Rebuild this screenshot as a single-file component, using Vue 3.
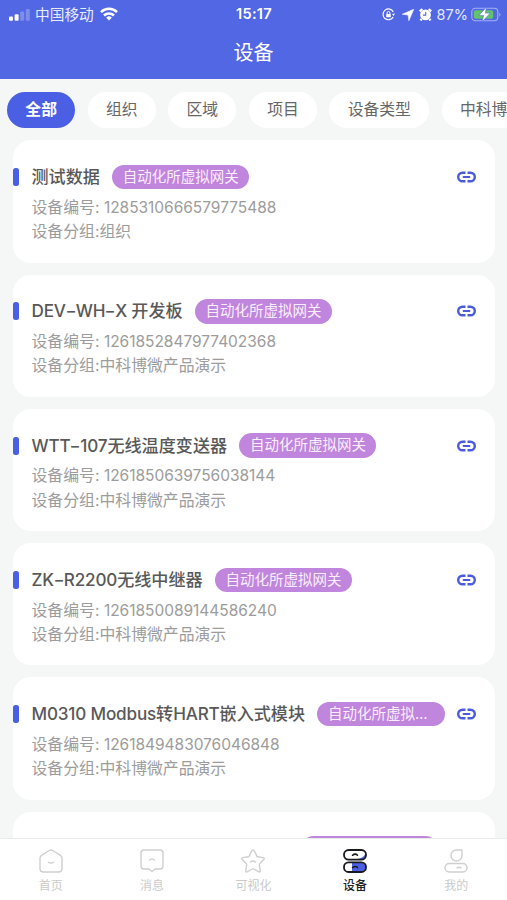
<script setup>
const tabs = ['全部', '组织', '区域', '项目', '设备类型', '中科博微']
const gateway = '自动化所虚拟网关'
const rows = [
  { name: '测试数据', id: '1285310666579775488', group: '组织' },
  { name: 'DEV-WH-X 开发板', id: '1261852847977402368', group: '中科博微产品演示' },
  { name: 'WTT-107无线温度变送器', id: '1261850639756038144', group: '中科博微产品演示' },
  { name: 'ZK-R2200无线中继器', id: '1261850089144586240', group: '中科博微产品演示' },
  { name: 'M0310 Modbus转HART嵌入式模块', id: '1261849483076046848', group: '中科博微产品演示' },
  { name: 'M1100 Modbus转HART 网关模块' },
]
const nav = [
  { key: 'home', label: '首页' },
  { key: 'msg', label: '消息' },
  { key: 'star', label: '可视化' },
  { key: 'device', label: '设备' },
  { key: 'me', label: '我的' },
]

// Splits a device name into hyphens, Latin runs and Chinese runs.
const parts = (name) =>
  name.match(/-|[\x20-\x2c\x2e-\x7e]+|[^\x00-\x7f]+/g).map((text) => ({
    text,
    kind: text === '-' ? 'dash' : text.charCodeAt(0) < 128 ? 'latin' : 'han',
  }))
</script>

<template>
  <div class="screen">
    <header class="header">
      <div class="status">
        <div class="status-left">
          <svg class="signal" width="22" height="12" viewBox="0 0 22 12" fill="#fff">
            <rect x="0" y="7.6" width="4" height="4.2" rx="1" />
            <rect x="5.6" y="5.2" width="4" height="6.6" rx="1" />
            <rect x="11.2" y="2.6" width="4" height="9.2" rx="1" opacity=".25" />
            <rect x="16.8" y="0" width="4" height="11.8" rx="1" opacity=".25" />
          </svg>
          <span class="carrier">中国移动</span>
          <svg class="wifi" width="18" height="14" viewBox="0 0 18 14" fill="none" stroke="#fff" stroke-width="2.6">
            <path d="M1 5.1a11.4 11.4 0 0 1 16 0" />
            <path d="M4 8.5a7.2 7.2 0 0 1 10 0" />
            <path d="M9 13.6 6.2 10.7a4 4 0 0 1 5.6 0z" fill="#fff" stroke="none" />
          </svg>
        </div>
        <span class="clock">15:17</span>
        <div class="status-right">
          <svg width="13" height="13" viewBox="0 0 13 13" fill="none" stroke="#fff" stroke-width="1.2">
            <path d="M11.3 3.9A5.4 5.4 0 1 0 11.2 9" />
            <path d="M10 6 11.7 8 13 5.6" fill="#fff" stroke="none" />
            <rect x="4.2" y="6" width="4.6" height="3.2" rx=".4" fill="#fff" stroke="none" />
            <path d="M5.1 6V4.9a1.4 1.4 0 0 1 2.8 0V6" stroke-width="1" />
          </svg>
          <svg class="arrow" width="12" height="12" viewBox="0 0 11 11" fill="#fff">
            <path d="M10.8.2 6.3 10.8 5.6 5.5.2 4.8z" stroke="#fff" stroke-width=".5" />
          </svg>
          <svg class="alarm" width="13" height="13" viewBox="0 0 13 13">
            <path d="M.8 3.4 3.3 1M12.2 3.4 9.7 1M2.6 11 1.5 12.5M10.4 11l1.1 1.5" stroke="#fff" stroke-width="2.2" />
            <circle cx="6.5" cy="6.9" r="5.4" fill="#fff" />
            <path d="M6.7 3.9v3.2H4" fill="none" stroke="#5267e4" stroke-width="1.1" />
          </svg>
          <span class="percent">87%</span>
          <svg class="battery" width="31" height="15" viewBox="0 0 31 15">
            <rect x=".8" y="1.3" width="26" height="12.4" rx="3.5" fill="none" stroke="#a5b0f3" stroke-width="1.1" />
            <rect x="2.8" y="3.2" width="19.4" height="8.6" rx="1.8" fill="#62c36b" />
            <path d="M28.2 5.4v4.2c2-.8 2-3.4 0-4.2z" fill="#8f9cee" />
            <path d="M15.7 0 7.8 8.4h4.8L11 15l8.3-8.9h-5z" fill="#fff" stroke="#5267e4" stroke-width=".6" />
          </svg>
        </div>
      </div>
      <h1 class="title">设备</h1>
    </header>

    <div class="tabs">
      <div v-for="(t, i) in tabs" :key="t" class="tab" :class="{ active: i === 0 }">{{ t }}</div>
    </div>

    <main class="list">
      <section v-for="r in rows" :key="r.name" class="card">
        <div class="card-head">
          <i class="bar"></i>
          <h2 class="name"><span v-for="(p, i) in parts(r.name)" :key="i" :class="p.kind">{{ p.text }}</span></h2>
          <span class="tag">{{ gateway }}</span>
          <svg class="link" width="19" height="12" viewBox="0 0 19 12" fill="none" stroke="#4a5bdc" stroke-width="2.4">
            <path d="M8.500 1.700H5.500a4.300 4.300 0 0 0 0 8.600h3M10.500 1.700h3a4.300 4.300 0 0 1 0 8.600h-3" />
            <path d="M5.800 6h7.400" stroke-width="2" />
          </svg>
        </div>
        <template v-if="r.id">
          <p class="line">设备编号: <span class="num">{{ r.id }}</span></p>
          <p class="line">设备分组:{{ r.group }}</p>
        </template>
      </section>
    </main>

    <nav class="nav">
      <div v-for="n in nav" :key="n.key" class="nav-item" :class="{ on: n.key === 'device' }">
        <svg width="24" height="24" viewBox="0 0 24 24" fill="none" stroke="#cfcfcf" stroke-width="1.4" stroke-linecap="round" stroke-linejoin="round">
          <template v-if="n.key === 'home'">
            <path d="M10.3 1.5 2.5 6.3Q1 7.3 1 9v10.5Q1 23 4.5 23h15q3.5 0 3.5-3.500V9q0-1.700-1.500-2.700l-7.800-4.800q-1.700-1-3.400 0z" />
            <path d="M9.500 13.200q2.500 1.800 5 0" />
          </template>
          <template v-else-if="n.key === 'msg'">
            <path d="M4 1h16q3 0 3 3v13q0 3-3 3h-5l-3 2.500L9 20H4q-3 0-3-3V4q0-3 3-3z" />
            <path d="M9.500 11q2.500-1.800 5 0" />
          </template>
          <template v-else-if="n.key === 'star'">
            <path d="M10.700 1.800q1.300-1.800 2.600 0l2.600 5.300q.3.600 1 .7l5.200.8q1.900.4.600 1.900l-4 4.200q-.5.500-.4 1.200l.9 5.700q.2 2-1.600 1.100L12.700 20q-.7-.4-1.400 0l-4.900 2.700q-1.800.9-1.600-1.100l.9-5.700q.1-.7-.4-1.200l-4-4.200Q0 9 1.900 8.600l5.200-.8q.7-.1 1-.7z" />
            <path d="M9.500 13q2.500-2 5 0" />
          </template>
          <template v-else-if="n.key === 'device'">
            <path d="M13.500 10.200Q20 9.500 22.300 5 22.700 10.200 18.500 10.200zM9 14h9.500a4.500 4.500 0 0 1 0 9H9z" fill="#4c60e5" stroke="none" />
            <rect x="1" y="1" width="22" height="9.700" rx="4.600" stroke="#18191f" stroke-width="1.800" />
            <rect x="1" y="13.300" width="22" height="9.700" rx="4.600" stroke="#18191f" stroke-width="1.800" />
            <path d="M9.500 6.300q2.800-2.300 5 0M9.500 18.600q2.800-2.300 5 0" stroke="#18191f" stroke-width="1.500" />
          </template>
          <template v-else>
            <path d="M18 1v5.500a5.500 5.500 0 1 1-5.500-5.500z" />
            <rect x="1" y="14.500" width="22" height="8.500" rx="4.200" />
            <path d="M13 18.800q2-1.200 4 0" />
          </template>
        </svg>
        <span class="nav-label">{{ n.label }}</span>
      </div>
    </nav>
  </div>
</template>

<style>
body {
  background: #f5f7f7;
  overflow: hidden;
}
</style>

<style scoped>
.screen {
  width: 507px;
  height: 900px;
  display: flex;
  flex-direction: column;
  overflow: hidden;
  background: #f5f7f7;
  font-family: Inter, 'Noto Sans CJK SC', sans-serif;
}
.header {
  flex: none;
  height: 79px;
  background: #5267e4;
  color: #fff;
}
.status {
  height: 28px;
  display: grid;
  grid-template-columns: 1fr auto 1fr;
  align-items: center;
  padding: 0 5px 0 9px;
}
.status-left,
.status-right {
  display: flex;
  align-items: center;
}
.status-right {
  justify-content: flex-end;
}
.signal {
  margin-right: 4px;
}
.carrier {
  padding-top: 1px;
  font-size: 14.7px;
  line-height: 28px;
  color: #e8ebff;
}
.wifi {
  margin: 0 0 2px 6.5px;
}
.clock {
  padding: 0 3px 1px 0;
  font-size: 14.6px;
  font-weight: 600;
  letter-spacing: 0.3px;
}
.arrow {
  margin-left: 7px;
}
.alarm {
  margin-left: 5px;
}
.percent {
  margin: 0 3px 0 5px;
  padding-bottom: 1px;
  font-size: 14.5px;
  color: #e3e7ff;
}
.title {
  margin: 11px 0 0;
  text-align: center;
  font-size: 20px;
  line-height: 28px;
  font-weight: 400;
}
.tabs {
  flex: none;
  display: flex;
  gap: 12.3px;
  padding: 12.5px 0 12.3px 7px;
  overflow: hidden;
}
.tab {
  flex: none;
  height: 36.5px;
  padding: 0 18.35px;
  border-radius: 19px;
  background: #fff;
  color: #666;
  font-size: 15.8px;
  line-height: 35.5px;
  white-space: nowrap;
}
.tab.active {
  background: #4a5fe4;
  color: #fff;
  font-weight: 700;
}
.list {
  flex: 1;
  min-height: 0;
  overflow: hidden;
  display: flex;
  flex-direction: column;
  gap: 12px;
  padding: 0 12.5px 0 13px;
}
.card {
  flex: none;
  box-sizing: border-box;
  height: 122.3px;
  padding-top: 24.5px;
  border-radius: 18px;
  background: #fff;
}
.card-head {
  display: flex;
  align-items: center;
  height: 24.5px;
  margin-bottom: 6.4px;
  padding-right: 18.5px;
}
.bar {
  flex: none;
  width: 5.5px;
  height: 18px;
  margin-right: 13px;
  border-radius: 2.5px;
  background: #4a5fe4;
}
.name {
  flex: none;
  margin: 0 12.4px 0 0;
  font-size: 17.1px;
  line-height: 24px;
  font-weight: 500;
  color: #585858;
  white-space: pre;
}
.latin {
  letter-spacing: -0.17px;
}
.dash {
  display: inline-block;
  padding: 0 1px;
  transform: scaleX(1.4);
}
.tag {
  box-sizing: border-box;
  min-width: 0;
  height: 24.5px;
  padding: 0 10.5px;
  border-radius: 13px;
  background: #c085dc;
  color: #fbeeff;
  font-size: 14.5px;
  line-height: 24px;
  white-space: nowrap;
  overflow: hidden;
  text-overflow: ellipsis;
}
.link {
  flex: none;
  margin-left: auto;
}
.tag + .link {
  padding-left: 12px;
}
.line {
  margin: 0;
  padding-left: 18.5px;
  font-size: 15.85px;
  line-height: 24.4px;
  color: #9c9c9c;
  white-space: nowrap;
}
.num {
  font-size: 15.5px;
  letter-spacing: -0.03px;
}
.nav {
  flex: none;
  box-sizing: border-box;
  height: 62px;
  display: grid;
  grid-template-columns: repeat(5, 1fr);
  border-top: 1px solid #e9ebeb;
  background: #fff;
}
.nav-item {
  display: flex;
  flex-direction: column;
  align-items: center;
  padding-top: 10px;
}
.nav-label {
  margin-top: 4px;
  font-size: 12px;
  line-height: 18px;
  color: #cacaca;
}
.on .nav-label {
  color: #222;
  font-weight: 500;
}
</style>
